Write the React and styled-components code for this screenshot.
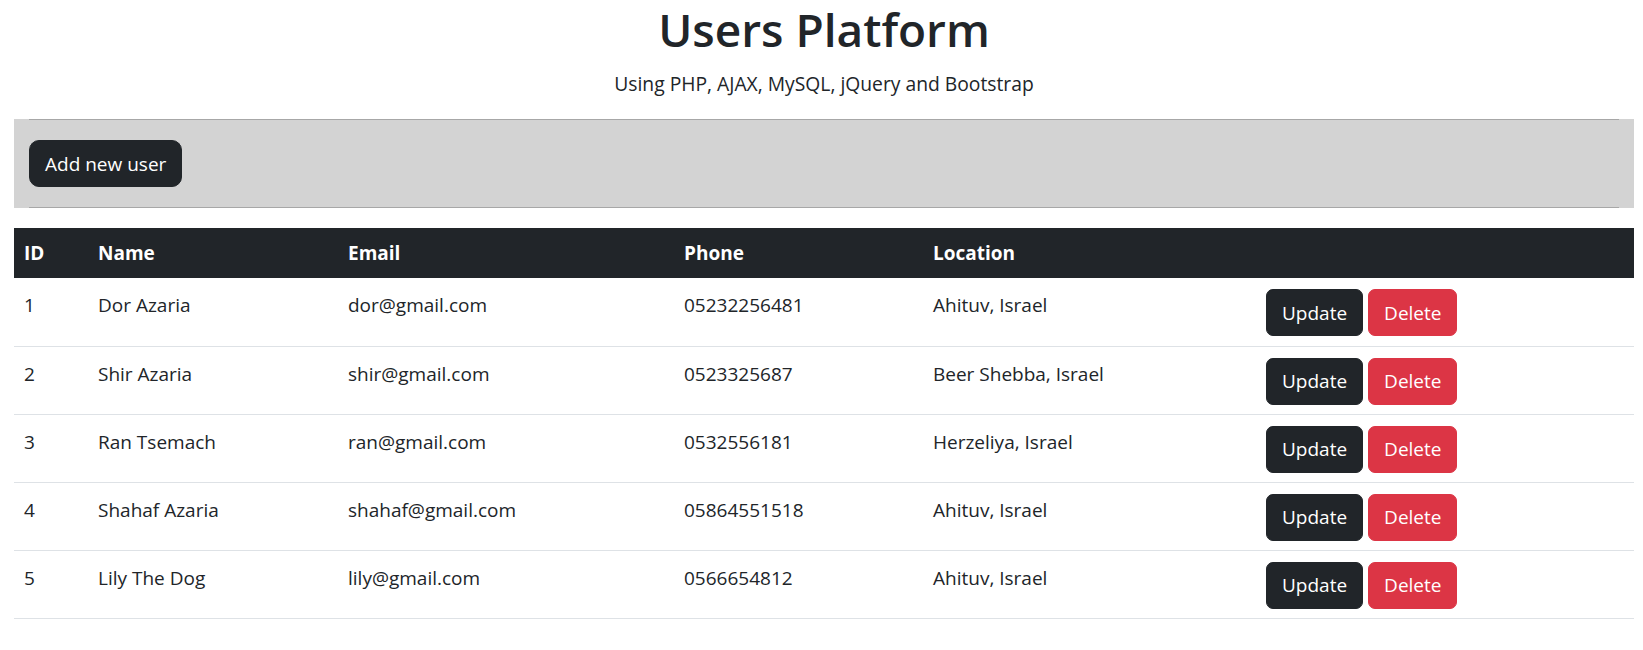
import React from 'react'
import styled, { createGlobalStyle } from 'styled-components'

const GlobalStyle = createGlobalStyle`
  * {
    box-sizing: border-box;
  }
  body {
    margin: 0;
    background: #fff;
    color: #212529;
    font-family: "Open Sans", "Noto Sans", sans-serif;
    font-size: 19px;
  }
`

const Page = styled.div`
  width: 1634px;
  padding: 2px 0 0 14px;
`

const Header = styled.header`
  text-align: center;
`

const Title = styled.h1`
  margin: 0;
  font-size: 46px;
  font-weight: 600;
  line-height: 1.2;
`

const Subtitle = styled.p`
  margin: 12px 0 0 0;
  font-size: 19.3px;
  line-height: 30px;
`

const Toolbar = styled.div`
  margin-top: 20px;
  padding: 0 15px;
  background: #d3d3d3;
`

const Rule = styled.hr`
  margin: 0;
  border: 0;
  border-top: 1px solid #a7a7a7;
`

const ToolbarBody = styled.div`
  padding: 20px 0;
`

const Button = styled.button`
  display: inline-block;
  height: 47px;
  padding: 0 15px;
  border: 1px solid ${({ color }) => color};
  border-radius: ${({ size }) => (size === 'lg' ? '10px' : '7px')};
  background: ${({ color }) => color};
  color: #fff;
  font-family: inherit;
  font-size: 19px;
  line-height: 30px;
  vertical-align: top;
  cursor: pointer;
  & + & {
    margin-left: 5px;
  }
`

const Table = styled.table`
  width: 1620px;
  margin-top: 20px;
  border-collapse: collapse;
  table-layout: fixed;
`

const HeadCell = styled.th`
  height: 50px;
  padding: 0 10px;
  background: #212529;
  color: #fff;
  font-weight: 700;
  text-align: left;
  line-height: 30px;
`

const Cell = styled.td`
  height: 68px;
  padding: ${({ actions }) => (actions ? '11px 10px 9px' : '12px 10px 8px')};
  line-height: 30px;
  vertical-align: top;
  border-bottom: 1px solid #dee2e6;
`

const columns = [
  { title: 'ID', width: 74 },
  { title: 'Name', width: 250 },
  { title: 'Email', width: 336 },
  { title: 'Phone', width: 249 },
  { title: 'Location', width: 333 },
  { title: '', width: 378 }
]

const users = [
  { id: 1, name: 'Dor Azaria', email: 'dor@gmail.com', phone: '05232256481', location: 'Ahituv, Israel' },
  { id: 2, name: 'Shir Azaria', email: 'shir@gmail.com', phone: '0523325687', location: 'Beer Shebba, Israel' },
  { id: 3, name: 'Ran Tsemach', email: 'ran@gmail.com', phone: '0532556181', location: 'Herzeliya, Israel' },
  { id: 4, name: 'Shahaf Azaria', email: 'shahaf@gmail.com', phone: '05864551518', location: 'Ahituv, Israel' },
  { id: 5, name: 'Lily The Dog', email: 'lily@gmail.com', phone: '0566654812', location: 'Ahituv, Israel' }
]

function App () {
  return (
    <Page>
      <GlobalStyle />
      <Header>
        <Title>Users Platform</Title>
        <Subtitle>Using PHP, AJAX, MySQL, jQuery and Bootstrap</Subtitle>
      </Header>
      <Toolbar>
        <Rule />
        <ToolbarBody>
          <Button size='lg' color='#212529'>Add new user</Button>
        </ToolbarBody>
        <Rule />
      </Toolbar>
      <Table>
        <colgroup>
          {columns.map((col, i) => (
            <col key={i} style={{ width: col.width }} />
          ))}
        </colgroup>
        <thead>
          <tr>
            {columns.map((col, i) => (
              <HeadCell key={i}>{col.title}</HeadCell>
            ))}
          </tr>
        </thead>
        <tbody>
          {users.map(user => (
            <tr key={user.id}>
              <Cell>{user.id}</Cell>
              <Cell>{user.name}</Cell>
              <Cell>{user.email}</Cell>
              <Cell>{user.phone}</Cell>
              <Cell>{user.location}</Cell>
              <Cell actions>
                <Button color='#212529'>Update</Button>
                <Button color='#dc3545'>Delete</Button>
              </Cell>
            </tr>
          ))}
        </tbody>
      </Table>
    </Page>
  )
}

export default App
